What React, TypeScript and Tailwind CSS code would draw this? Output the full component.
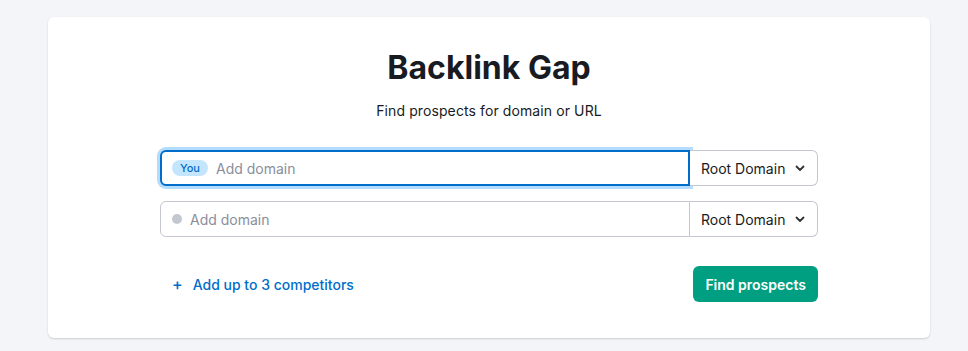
import React from "react";

function Chevron() {
  return (
    <svg width="12" height="12" viewBox="0 0 12 12" fill="none" className="text-[#333]">
      <path d="M2.5 4.5L6 8l3.5-3.5" stroke="currentColor" strokeWidth="1.8" strokeLinecap="round" strokeLinejoin="round" />
    </svg>
  );
}

function DomainRow({ you }: { you?: boolean }) {
  return (
    <div className="flex h-9 w-full">
      <div
        className={
          you
            ? "flex flex-1 items-center gap-2 rounded-l-md border-2 border-[#006dca] bg-white px-[10px] shadow-[0_0_0_3px_#b3dcff]"
            : "flex flex-1 items-center gap-2 rounded-l-md border border-[#c4c7cf] bg-white px-[11px]"
        }
      >
        {you ? (
          <span className="rounded-full bg-[#c4e5fe] px-[8px] py-[1px] text-[11px] font-medium leading-[14px] text-[#006dca]">
            You
          </span>
        ) : (
          <span className="h-[10px] w-[10px] rounded-full bg-[#c4c7cf]" />
        )}
        <span className="text-[14px] text-[#8a8e9b]">Add domain</span>
      </div>
      <button className="flex w-[128px] items-center justify-between rounded-r-md border border-l-0 border-[#c4c7cf] bg-white pl-[11px] pr-[11px] text-[14px] text-[#191b23]">
        Root Domain
        <Chevron />
      </button>
    </div>
  );
}

export default function App() {
  return (
    <div className="min-h-screen bg-[#f4f5f9] px-[48px] pt-[17px] font-['Inter',sans-serif]">
      <div className="h-[321px] w-[882px] rounded-md bg-white shadow-[0_1px_2px_rgba(25,27,35,0.18)]">
        <div className="flex flex-col items-center pt-[31px]">
          <h1 className="text-[32px] font-bold leading-[40px] text-[#191b23]">Backlink Gap</h1>
          <p className="mt-[13px] text-[14px] leading-[20px] tracking-[0.1px] text-[#191b23]">Find prospects for domain or URL</p>
          <div className="mt-[29px] flex w-[658px] flex-col gap-[15px]">
            <DomainRow you />
            <DomainRow />
          </div>
          <div className="mt-[29px] flex w-[658px] items-center justify-between">
            <button className="flex items-center gap-[10px] pl-[12px] text-[14px] font-medium text-[#006dca]">
              <span className="text-[16px] leading-none">+</span>
              Add up to 3 competitors
            </button>
            <button className="h-9 rounded-md bg-[#009f81] px-[12px] text-[14px] font-semibold text-white">
              Find prospects
            </button>
          </div>
        </div>
      </div>
    </div>
  );
}
